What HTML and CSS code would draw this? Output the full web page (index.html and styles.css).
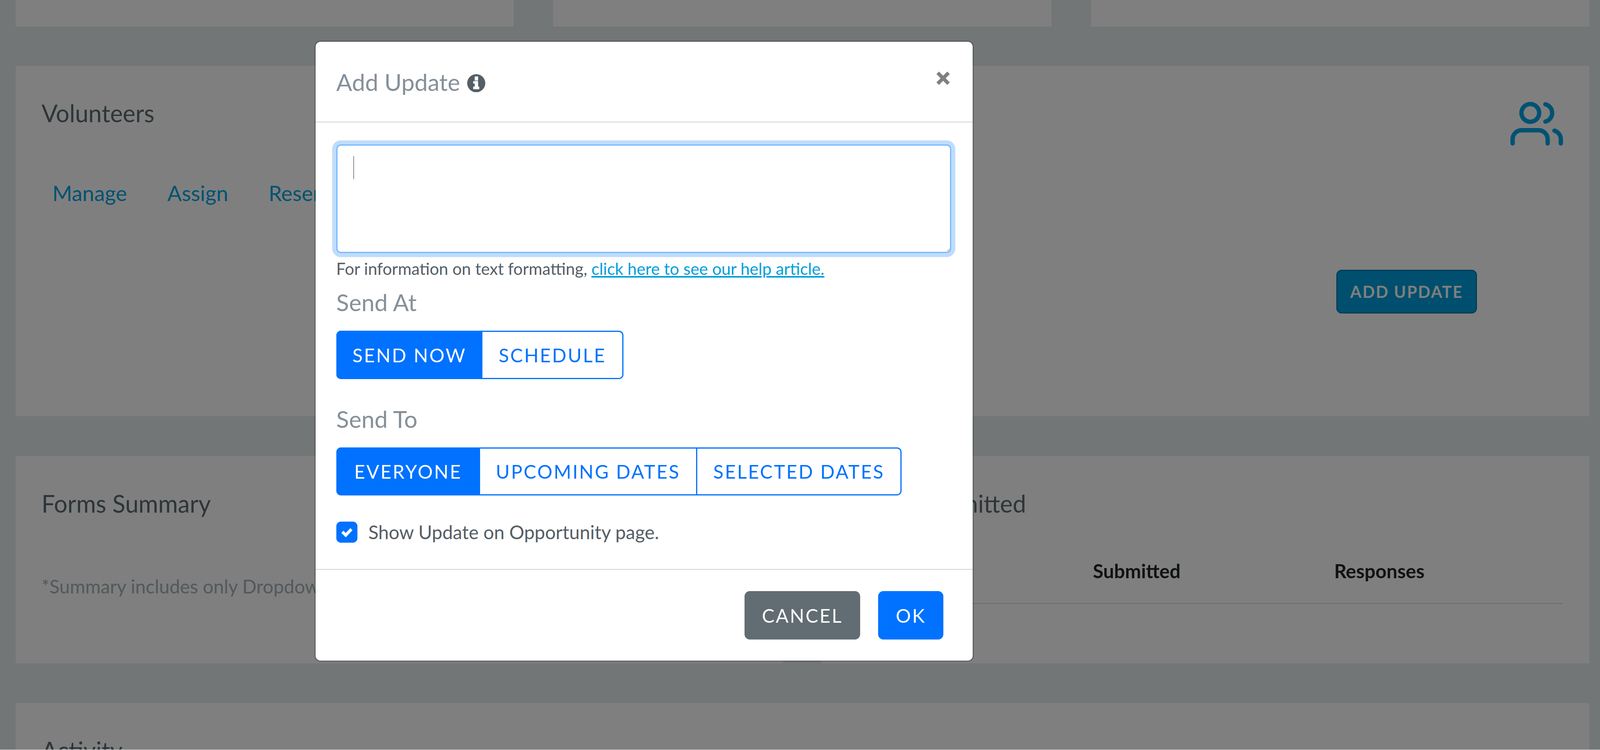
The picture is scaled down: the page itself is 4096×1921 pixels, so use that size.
FILE: index.html
```html
<!DOCTYPE html>
<html lang="en">
<head>
<meta charset="utf-8">
<title>Add Update</title>
<link rel="stylesheet" href="styles.css">
</head>
<body>
<main class="page">
  <section class="top-row">
    <div class="card top-card"></div>
    <div class="card top-card"></div>
    <div class="card top-card"></div>
  </section>
  <section class="card volunteers">
    <div class="vol-head">
      <h2 class="card-title vol-title">Volunteers</h2>
      <svg class="users-icon" viewBox="0 0 160 140" width="160" height="140" fill="none" stroke="#00a4e4" stroke-width="11.5" stroke-linecap="round" aria-hidden="true">
        <circle cx="69" cy="50" r="23.5"/>
        <path d="M109 27A23.7 23.7 0 0 1 109 73"/>
        <path d="M22 131V120A24 24 0 0 1 46 96H91A24 24 0 0 1 115 120V131"/>
        <path d="M133 97A24 24 0 0 1 150 120V131"/>
      </svg>
    </div>
    <nav class="tabs">
      <a class="tab">Manage</a>
      <a class="tab">Assign</a>
      <a class="tab">Reservations</a>
    </nav>
    <div class="vol-actions"><button class="add-update">ADD UPDATE</button></div>
  </section>
  <section class="forms-row">
    <div class="card forms-card">
      <h2 class="card-title">Forms Summary</h2>
      <p class="note">*Summary includes only Dropdown fields.</p>
    </div>
    <div class="card forms-card">
      <h2 class="card-title">Forms Submitted</h2>
      <div class="table-head">
        <span class="th">Form Name</span>
        <span class="th">Submitted</span>
        <span class="th">Responses</span>
      </div>
    </div>
  </section>
  <section class="card activity">
    <h2 class="card-title">Activity</h2>
  </section>
</main>

<div class="backdrop">
  <div class="modal">
    <header class="modal-header">
      <h1 class="modal-title">Add Update
        <svg class="info-icon" viewBox="0 0 48 48" width="48" height="48" aria-hidden="true">
          <circle cx="24" cy="24" r="24" fill="#545f68"/>
          <rect x="20" y="6" width="9" height="11" fill="#fff"/>
          <path d="M16 18.5H29V33H32V40H16V33H20V25H16Z" fill="#fff"/>
        </svg>
      </h1>
      <svg class="close-icon" viewBox="0 0 36 36" width="36" height="36" aria-hidden="true">
        <path d="M7 7L29 29M29 7L7 29" stroke="#808080" stroke-width="9.5" stroke-linecap="square" fill="none"/>
      </svg>
    </header>
    <div class="modal-body">
      <div class="editor">
        <textarea class="editor-input" aria-label="Update"></textarea>
        <span class="caret"></span>
      </div>
      <p class="help">For information on text formatting, <a class="help-link">click here to see our help article.</a></p>
      <div class="field-label first-label">Send At</div>
      <div class="btn-group">
        <button class="seg seg-on seg-now">SEND NOW</button>
        <button class="seg seg-schedule">SCHEDULE</button>
      </div>
      <div class="field-label second-label">Send To</div>
      <div class="btn-group">
        <button class="seg seg-on seg-everyone">EVERYONE</button>
        <button class="seg seg-upcoming">UPCOMING DATES</button>
        <button class="seg seg-selected">SELECTED DATES</button>
      </div>
      <label class="check-row">
        <span class="check-box">
          <svg viewBox="0 0 56 56" width="56" height="56" aria-hidden="true"><path d="M16 27L25 36L40 20" stroke="#fff" stroke-width="8" fill="none"/></svg>
        </span>
        <span class="check-text">Show Update on Opportunity page.</span>
      </label>
    </div>
    <footer class="modal-footer">
      <button class="foot-btn cancel">CANCEL</button>
      <button class="foot-btn ok">OK</button>
    </footer>
  </div>
</div>
</body>
</html>
```
FILE: styles.css
```css
html {
  zoom: 0.965;
  overflow: hidden;
}
* { box-sizing: border-box; }
body {
  margin: 0;
  height: 1990px;
  overflow: hidden;
  position: relative;
  background: #e4ecec;
  font-family: "Lato", "Noto Sans", sans-serif;
}
button { font-family: inherit; cursor: pointer; }
h1, h2, p { margin: 0; font-weight: 400; }

.page {
  padding: 0 28px 0 41px;
  height: 1990px;
  overflow: hidden;
}
.card { background: #fff; }
.top-row {
  display: grid;
  grid-template-columns: repeat(3, 1fr);
  column-gap: 105px;
}
.top-card { height: 70px; }
.card-title {
  font-size: 63.5px;
  line-height: 74px;
  color: #5a6a70;
}
.volunteers {
  margin-top: 105px;
  height: 930px;
  padding: 75px 66px 0 69px;
}
.vol-head {
  display: flex;
  justify-content: space-between;
  align-items: flex-start;
}
.vol-title { margin-top: 13px; }
.users-icon { display: block; }
.tabs {
  display: flex;
  gap: 107px;
  margin: 90px 0 0 29px;
}
.tab {
  font-size: 56.5px;
  line-height: 66px;
  color: #00a4e4;
}
.vol-actions {
  display: flex;
  justify-content: flex-end;
  margin: 170px 232px 0 0;
}
.add-update {
  width: 374px;
  height: 116px;
  padding: 0;
  background: #009edc;
  border: 3.2px solid #007ab0;
  border-radius: 14px;
  color: #fff;
  font-size: 43px;
  font-weight: 700;
  letter-spacing: 2.6px;
}
.forms-row {
  margin-top: 105px;
  display: grid;
  grid-template-columns: 1fr 1fr;
  column-gap: 103px;
}
.forms-card {
  height: 551px;
  padding: 90px 70px 0 69px;
}
.note {
  margin-top: 153px;
  font-size: 49.7px;
  line-height: 58px;
  color: #a4b2b8;
  white-space: nowrap;
}
.table-head {
  margin-top: 112px;
  display: grid;
  grid-template-columns: 631px 640px 1fr;
  padding: 0 0 56px 19px;
  border-bottom: 3.2px solid #dee2e6;
}
.th {
  font-size: 51px;
  line-height: 58px;
  font-weight: 700;
  color: #212529;
}
.activity {
  margin-top: 105px;
  height: 400px;
  padding: 88px 69px 0;
}

.backdrop {
  position: absolute;
  inset: 0;
  background: rgba(0, 0, 0, 0.5);
}
.modal {
  position: absolute;
  left: 834px;
  top: 108px;
  width: 1749px;
  background: #fff;
  background-clip: padding-box;
  border: 3.2px solid rgba(0, 0, 0, 0.2);
  border-radius: 16px;
}
.modal-header {
  height: 214px;
  padding: 2px 60px 0 55px;
  border-bottom: 3.2px solid #dee2e6;
  display: flex;
  justify-content: space-between;
  align-items: center;
}
.modal-title {
  display: flex;
  align-items: center;
  gap: 19px;
  font-size: 62.5px;
  line-height: 72px;
  color: #869099;
}
.info-icon { display: block; margin-top: 7px; }
.close-icon { display: block; margin-bottom: 20px; }
.modal-body { padding: 58px 57px 0 55px; }
.editor { position: relative; height: 288px; }
.editor-input {
  display: block;
  width: 100%;
  height: 288px;
  border: 3.2px solid #74b8ff;
  border-radius: 12px;
  box-shadow: 0 0 0 11px #bfdcfd;
  outline: none;
  background: #fff;
  caret-color: transparent;
}
.caret {
  position: absolute;
  left: 46px;
  top: 31px;
  width: 1.1px;
  height: 62px;
  background: #222;
}
.help {
  margin-top: 12px;
  font-size: 43.7px;
  line-height: 60px;
  color: #545e66;
}
.help-link { color: #009edc; text-decoration: underline; }
.field-label {
  font-size: 62.5px;
  line-height: 72px;
  color: #869099;
}
.first-label { margin-top: 23px; }
.second-label { margin-top: 70px; }
.btn-group {
  display: flex;
  margin-top: 40px;
  height: 128px;
}
.seg {
  height: 128px;
  padding: 0;
  background: #fff;
  border: 3.2px solid #0072ff;
  border-left-width: 0;
  color: #0072ff;
  font-size: 50px;
  letter-spacing: 3.5px;
}
.seg:first-child { border-left-width: 3.2px; border-radius: 12px 0 0 12px; }
.seg:last-child { border-radius: 0 12px 12px 0; }
.seg-on { background: #0072ff; color: #fff; }
.seg-now { width: 388px; }
.seg-schedule { width: 374px; }
.seg-everyone { width: 381px; }
.seg-upcoming { width: 577px; }
.seg-selected { width: 542px; }
.btn-group + .field-label + .btn-group { margin-top: 39px; }
.check-row {
  display: flex;
  align-items: center;
  gap: 29px;
  margin-top: 69px;
  height: 56px;
}
.check-box {
  width: 56px;
  height: 56px;
  border-radius: 12px;
  background: #0072ff;
}
.check-box svg { display: block; }
.check-text {
  font-size: 49.7px;
  line-height: 56px;
  color: #545e66;
}
.modal-footer {
  margin-top: 70px;
  border-top: 3.2px solid #dee2e6;
  padding: 56px 77px 56px 0;
  display: flex;
  justify-content: flex-end;
  gap: 48px;
}
.foot-btn {
  height: 128px;
  padding: 0;
  border: 0;
  border-radius: 14px;
  color: #fff;
  font-size: 50px;
  letter-spacing: 3.5px;
}
.cancel { width: 307px; background: #616d72; }
.ok { width: 173px; background: #0072ff; }
```
